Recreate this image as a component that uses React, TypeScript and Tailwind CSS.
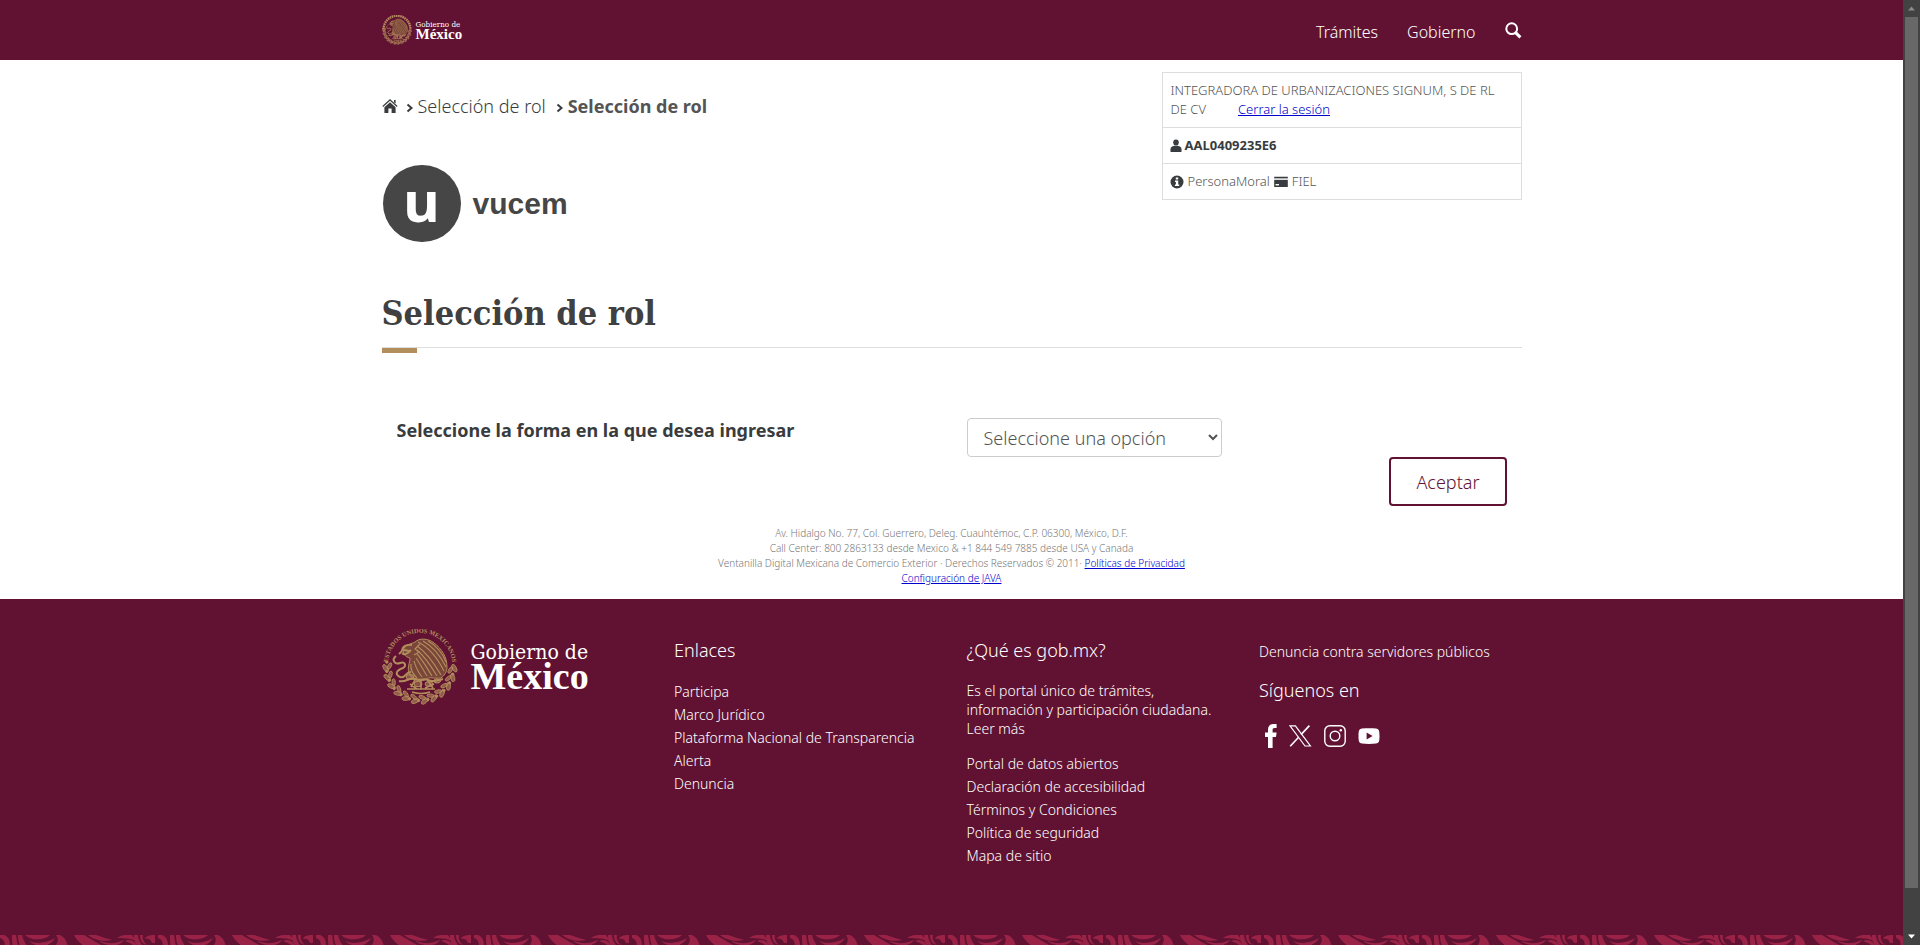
import React from "react";

function Emblem({ className, detailed = false }: { className: string; detailed?: boolean }) {
  const leaves = Array.from({ length: 12 }, (_, i) => 2 + i * 16);
  return (
    <svg viewBox="0 0 76 76" className={className} fill="none" stroke="#b38e5d" aria-hidden="true">
      {detailed ? (
        <>
          <path id="seal-arc" d="M5.8 36 A32.2 32.2 0 0 1 70.2 36" stroke="none" />
          <text fill="#b38e5d" stroke="none" fontSize="6.3" fontWeight="700" fontFamily="Liberation Serif, serif">
            <textPath href="#seal-arc" startOffset="50%" textAnchor="middle">ESTADOS UNIDOS MEXICANOS</textPath>
          </text>
        </>
      ) : (
        <path d="M4 36 A34 34 0 0 1 72 36" strokeWidth="6" strokeDasharray="4 1.6" />
      )}
      {leaves.map((a) => (
        <g key={a} transform={`rotate(${a} 38 38)`} strokeWidth="0.8">
          <ellipse cx="72.4" cy="38" rx="2" ry="4.2" fill="#b38e5d" fillOpacity="0.6" transform="rotate(-30 72.4 38)" />
          <ellipse cx="68.4" cy="40" rx="1.7" ry="3.6" fill="#b38e5d" fillOpacity="0.6" transform="rotate(30 68.4 40)" />
          <circle cx="71" cy="44" r="1.2" fill="#b38e5d" />
        </g>
      ))}
      <path
        d="M33 13 C37 9 46 9 52 14 C60 20 65 28 65 38 C65 43 62 47 59 49 C52 50 46 47 43 51 C37 53 29 51 27 44 C25 38 28 34 28 29 C23 28 20 24 22 19 C25 15 29 15 33 13Z"
        fill="#7a4639"
        strokeWidth="1"
      />
      <g strokeWidth="1.1">
        <path d="M36 13 C46 18 55 28 62 42" />
        <path d="M41 12 C50 17 58 26 64 38" />
        <path d="M46 12 C54 16 61 25 64 33" />
        <path d="M35 17 C44 23 52 34 59 46" />
        <path d="M35 21 C42 27 49 37 55 47" />
        <path d="M35 25 C40 30 45 39 50 47" />
        <path d="M34 29 C37 33 40 39 45 47" />
        <path d="M32 32 C34 38 35 42 40 48" />
        <path d="M29 35 C28 40 31 45 35 49" />
        <path d="M38 15 L33 20 L37 23 L32 26" />
      </g>
      <path d="M30 16 C24 15 20 18 20 22 L17 25 M22 21 L27 22 M20 24 C23 27 26 24 29 21" strokeWidth="1.8" />
      <path d="M14 27 C9 31 13 36 18 34 C23 32 25 37 21 39 C15 41 12 45 18 48 C24 50 23 43 29 43" strokeWidth="2" />
      <path d="M17 52 C24 54 26 48 33 50 C39 52 42 49 46 51 C52 54 56 51 61 50" strokeWidth="2" />
      <path d="M33 51 L29 58 M39 51 V60 M46 52 L51 59 M28 55 L35 60 M43 59 L52 55 M25 60 H53 M30 63 C36 65 42 65 48 63" strokeWidth="1.6" />
      <g fill="#b38e5d" fillOpacity="0.5" strokeWidth="1">
        <ellipse cx="28" cy="48" rx="4" ry="2.4" />
        <ellipse cx="36" cy="55" rx="4" ry="2.8" />
        <ellipse cx="47" cy="55" rx="4" ry="2.4" />
        <ellipse cx="55" cy="52" rx="3.5" ry="2" />
      </g>
    </svg>
  );
}

function HomeIcon() {
  return (
    <svg viewBox="0 0 16 16" className="h-4 w-4" fill="#393c3e">
      <path d="M8 1 L15.6 8 L14.8 9 L8 2.8 L1.2 9 L0.4 8Z" />
      <path d="M8 4.2 L13.6 9.2 V15 H9.6 V10.4 H6.4 V15 H2.4 V9.2Z" />
      <path d="M12 2 H13.6 V5.6 L12 4.2Z" />
    </svg>
  );
}

function Chevron() {
  return (
    <svg viewBox="0 0 8 10" className="mt-1 h-2.5 w-2" fill="none" stroke="#393c3e" strokeWidth="2" aria-hidden="true">
      <path d="M1.5 1.5 L5.5 5 L1.5 8.5" />
    </svg>
  );
}

function SearchIcon() {
  return (
    <svg viewBox="0 0 17 17" className="h-[17px] w-[17px]" fill="none" stroke="#fff">
      <circle cx="6.7" cy="6.7" r="5.4" strokeWidth="2" />
      <path d="M10.6 10.6 L15.4 15.4" strokeWidth="3" />
    </svg>
  );
}

function UserIcon() {
  return (
    <svg viewBox="0 0 12 14" className="h-3.5 w-3" fill="#393c3e" aria-hidden="true">
      <path d="M6 0.4 C8 0.4 8.8 1.6 8.8 3.2 C8.8 4.8 8.2 6 7.4 6.4 H4.6 C3.8 6 3.2 4.8 3.2 3.2 C3.2 1.6 4 0.4 6 0.4Z" />
      <path d="M3.4 7 H8.6 C10.6 7.4 11.5 8.6 11.5 10.2 V13 H0.5 V10.2 C0.5 8.6 1.4 7.4 3.4 7Z" />
    </svg>
  );
}

function InfoIcon() {
  return (
    <svg viewBox="0 0 14 14" className="h-3.5 w-3.5" aria-hidden="true">
      <circle cx="7" cy="7" r="6.5" fill="#393c3e" />
      <path d="M5.8 2.6 H8.2 V4.6 H5.8Z M5 5.6 H8.2 V9.6 H9.2 V11 H4.9 V9.6 H5.9 V7 H5Z" fill="#fff" />
    </svg>
  );
}

function CardIcon() {
  return (
    <svg viewBox="0 0 14 14" className="h-3.5 w-3.5" aria-hidden="true">
      <path d="M0.2 1.8 H13.8 V3.6 H0.2Z M0.2 5 H13.8 V12 H0.2Z" fill="#393c3e" />
      <path d="M0.2 3.6 H13.8 V5 H0.2Z" fill="#ddd" />
      <path d="M1.6 9 H5 V10.4 H1.6Z" fill="#fff" />
    </svg>
  );
}

const enlaces = ["Participa", "Marco Jurídico", "Plataforma Nacional de Transparencia", "Alerta", "Denuncia"];
const portal = ["Portal de datos abiertos", "Declaración de accesibilidad", "Términos y Condiciones", "Política de seguridad", "Mapa de sitio"];

function LinkList({ items }: { items: string[] }) {
  return (
    <ul>
      {items.map((t) => (
        <li key={t} className="leading-[23px]">
          <a href="#">{t}</a>
        </li>
      ))}
    </ul>
  );
}

function Greca() {
  return (
    <svg className="block h-[53px] w-full" aria-hidden="true">
      <defs>
        <pattern id="greca" width="158" height="53" patternUnits="userSpaceOnUse">
          <g fill="#9b2247">
            <path d="M0 0 H4 C9 2 10 6 10 12 H5 C5 7 4 4 0 3Z" />
            <path d="M12 0 H16 C17 6 17 10 21 20 H15 C12 12 12 6 12 0Z" />
            <path d="M18 0 H22 C23 6 27 10 31 18 H25 C20 12 18 7 18 0Z" />
            <path d="M25 0 H50 C46 4 38 5 33 4 C30 3 27 2 25 0Z" />
            <path d="M29 6 C38 10 48 7 55 3 C50 12 38 14 29 6Z" />
            <path d="M56 0 H60 C66 3 68 8 69 20 H63 C63 12 60 8 55 12 C58 7 59 4 56 0Z" />
            <path d="M74 0 H84 C90 4 98 8 108 14 V20 H96 C88 14 78 8 74 0Z" />
            <path d="M88 0 H96 C102 2 108 4 112 5 C104 7 94 5 88 0Z" />
            <path d="M99 6 C108 8 112 10 124 5 C120 12 107 12 99 6Z" />
            <path d="M117 3 C122 0 124 0 127 0 H132 L136 6 C130 3 124 3 117 3Z" />
            <path d="M125 6 C132 3 137 8 138 14 C133 9 130 8 125 6Z" />
            <path d="M134 0 H138 C138 5 141 8 143 12 H138 C135 8 134 5 134 0Z" />
            <path d="M140 0 H143 C142 5 144 7 147 10 C142 9 140 5 140 0Z" />
            <path d="M145 4 C146 1 149 0 155 0 V8 H152 C151 4 148 3 145 4Z" />
          </g>
        </pattern>
      </defs>
      <rect width="100%" height="53" fill="url(#greca)" />
    </svg>
  );
}

function SocialLinks() {
  return (
    <div className="flex items-center gap-2.5 pl-[5px]">
      <a href="#" aria-label="Facebook">
        <svg viewBox="0 0 14 24" className="h-6 w-3.5" fill="#fff">
          <path d="M4 24 V13 H1 V8.6 H4 V5.4 C4 2 6 0 9.4 0 H12.6 V4 H10.6 C9 4 8.6 4.8 8.6 6 V8.6 H12.6 L12 13 H8.6 V24Z" />
        </svg>
      </a>
      <a href="#" aria-label="X" className="mr-px">
        <svg viewBox="0 0 24 24" className="h-6 w-6" fill="none" stroke="#fff" strokeWidth="1.2">
          <path d="M2 1.8 H7.4 L22.4 22 H17Z" />
          <path d="M21.4 1.6 L13 10.6 M10.6 13.2 L2.2 22.2" strokeWidth="1.6" />
        </svg>
      </a>
      <a href="#" aria-label="Instagram" className="mr-px">
        <svg viewBox="0 0 24 24" className="h-6 w-6" fill="none" stroke="#fff">
          <rect x="1.8" y="1.8" width="20.4" height="20.4" rx="5" strokeWidth="1.4" />
          <circle cx="12" cy="12" r="4.8" strokeWidth="1.4" />
          <circle cx="17.8" cy="6.2" r="1.2" fill="#fff" stroke="none" />
        </svg>
      </a>
      <a href="#" aria-label="YouTube">
        <svg viewBox="0 0 22 16" className="h-4 w-[22px]">
          <path d="M4 0.5 C8 0 14 0 18 0.5 C20.6 0.7 21.5 2 21.5 8 C21.5 14 20.6 15.3 18 15.5 C14 16 8 16 4 15.5 C1.4 15.3 0.5 14 0.5 8 C0.5 2 1.4 0.7 4 0.5Z" fill="#fff" />
          <path d="M8.6 4.6 L14.6 8 L8.6 11.4Z" fill="#611232" />
        </svg>
      </a>
    </div>
  );
}

export default function App() {
  return (
    <div className="flex h-screen overflow-hidden bg-white font-['Noto_Sans',sans-serif] font-light text-[#393c3e]">
      <div className="min-w-0 flex-1 overflow-hidden">
        <header className="bg-[#611232] text-white">
          <div className="mx-auto flex h-[60px] max-w-[1140px] items-center justify-between">
            <a href="#" aria-label="Gobierno de México" className="flex items-center gap-1">
              <Emblem className="h-[30px] w-[30px]" />
              <span className="flex flex-col">
                <span className="font-['DejaVu_Serif_Condensed','DejaVu_Serif',serif] text-[8px] leading-[9px] font-normal">
                  Gobierno de
                </span>
                <span className="font-['Liberation_Serif',serif] text-[15px] leading-[11px] font-bold">México</span>
              </span>
            </a>
            <nav className="flex items-center gap-[29px] pt-1 text-base">
              <a href="#">Trámites</a>
              <a href="#">Gobierno</a>
              <button type="button" aria-label="Buscar" className="pb-1">
                <SearchIcon />
              </button>
            </nav>
          </div>
        </header>

        <main className="mx-auto max-w-[1140px]">
          <div className="flex justify-between pt-3">
            <div>
              <nav aria-label="Ruta" className="flex items-center pt-[21px] text-lg leading-[26px]">
                <a href="#" aria-label="Inicio" className="mr-2">
                  <HomeIcon />
                </a>
                <Chevron />
                <a href="#" className="mr-2.5 ml-1">Selección de rol</a>
                <Chevron />
                <span className="ml-1 font-bold text-[#545454]">Selección de rol</span>
              </nav>
              <div className="flex items-center gap-3 pt-[46px] pl-px font-bold">
                <span className="flex h-[77px] w-[78px] items-center justify-center rounded-full bg-[#464646] pb-2 text-[56px] leading-none text-white">
                  u
                </span>
                <span className="font-['Liberation_Sans',sans-serif] text-[30px] leading-none text-[#464646]">vucem</span>
              </div>
            </div>
            <section className="h-fit w-[360px] divide-y divide-[#ddd] border border-[#ddd] text-[13px] leading-[19px] text-[#545454]">
              <p className="p-2">
                INTEGRADORA DE URBANIZACIONES SIGNUM, S DE RL DE CV
                <a href="#" className="ml-8 text-[#0000cc] underline">Cerrar la sesión</a>
              </p>
              <p className="flex items-center gap-[3px] p-2 pl-[7px] font-bold text-[#393c3e]">
                <UserIcon />
                AAL0409235E6
              </p>
              <p className="flex items-center gap-1 p-2 pl-[7px]">
                <InfoIcon />
                PersonaMoral
                <CardIcon />
                FIEL
              </p>
            </section>
          </div>

          <h1 className="mt-[48px] border-b border-[#dddfdf] pb-[10px] font-['DejaVu_Serif_Condensed','DejaVu_Serif',serif] text-[34px] leading-[47px] font-bold text-[#404041]">
            Selección de rol
          </h1>
          <div className="h-[5px] w-[35px] bg-[#b38e5d]" />

          <form className="px-[15px] pt-[65px]" onSubmit={(e) => e.preventDefault()}>
            <div className="grid grid-cols-2 items-start gap-[30px] text-lg">
              <label htmlFor="rol" className="leading-6 font-bold">
                Seleccione la forma en la que desea ingresar
              </label>
              <select
                id="rol"
                className="h-[39px] w-[255px] rounded border border-[#ccc] bg-white px-3 font-light text-[#545454]"
              >
                <option>Seleccione una opción</option>
              </select>
            </div>
            <div className="flex justify-end">
              <button type="submit" className="h-[49px] rounded border-2 border-[#611232] px-[25px] text-lg text-[#611232]">
                Aceptar
              </button>
            </div>
          </form>

          <div className="pt-5 pb-[13px] text-center text-[10px] leading-[15px] text-[#777]">
            <p>Av. Hidalgo No. 77, Col. Guerrero, Deleg. Cuauhtémoc, C.P. 06300, México, D.F.</p>
            <p>Call Center: 800 2863133 desde Mexico &amp; +1 844 549 7885 desde USA y Canada</p>
            <p>
              Ventanilla Digital Mexicana de Comercio Exterior · Derechos Reservados © 2011·{" "}
              <a href="#" className="text-[#0000cc] underline">Políticas de Privacidad</a>
            </p>
            <p>
              <a href="#" className="text-[#0000cc] underline">Configuración de JAVA</a>
            </p>
          </div>
        </main>

        <footer className="bg-[#611232] text-sm text-white">
          <div className="mx-auto grid min-h-[336px] max-w-[1140px] grid-cols-4 gap-[30px] pt-[30px]">
            <div className="flex h-[76px] items-center gap-[13px]">
              <Emblem detailed className="h-[76px] w-[76px]" />
              <span className="flex flex-col pb-1">
                <span className="font-['DejaVu_Serif_Condensed','DejaVu_Serif',serif] text-[21px] leading-[22px] font-normal">
                  Gobierno de
                </span>
                <span className="font-['Liberation_Serif',serif] text-[38px] leading-[26px] font-bold">México</span>
              </span>
            </div>
            <div className="pt-[7px]">
              <h2 className="mb-4 text-lg leading-7">Enlaces</h2>
              <LinkList items={enlaces} />
            </div>
            <div className="pt-[7px]">
              <h2 className="mb-[17px] text-lg leading-7">¿Qué es gob.mx?</h2>
              <p className="mb-[14px] leading-[19px]">
                Es el portal único de trámites, información y participación ciudadana.{" "}
                <a href="#" className="block">Leer más</a>
              </p>
              <LinkList items={portal} />
            </div>
            <div className="pt-[9px]">
              <a href="#" className="block leading-7">Denuncia contra servidores públicos</a>
              <h2 className="mt-2.5 mb-5 text-lg leading-7">Síguenos en</h2>
              <SocialLinks />
            </div>
          </div>
          <Greca />
        </footer>
      </div>

      <div className="flex h-full w-[17px] flex-col items-center bg-[#424242]" aria-hidden="true">
        <svg viewBox="0 0 17 17" className="h-[17px] w-[17px]" fill="#8a8a8a">
          <path d="M8.5 6.5 L12 10.5 H5Z" />
        </svg>
        <div className="w-[13px] flex-[871] bg-[#686868]" />
        <div className="flex-[40]" />
        <svg viewBox="0 0 17 17" className="h-[17px] w-[17px]" fill="#fff">
          <path d="M5 6.5 H12 L8.5 10.5Z" />
        </svg>
      </div>
    </div>
  );
}
